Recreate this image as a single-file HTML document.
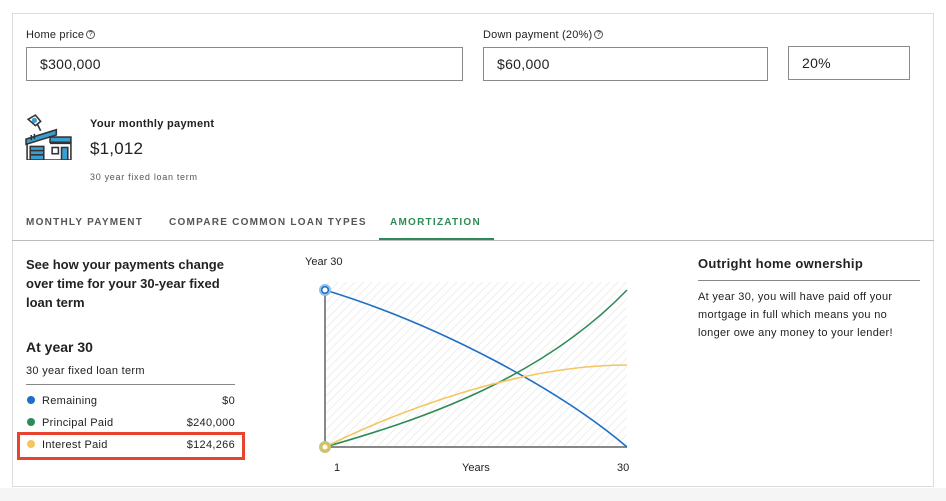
<!DOCTYPE html>
<html><head><style>
*{margin:0;padding:0;box-sizing:border-box}
body{width:946px;height:501px;background:#fff;font-family:"Liberation Sans",sans-serif;color:#222;position:relative;overflow:hidden}
.a{position:absolute;white-space:nowrap}
.card{position:absolute;left:12px;top:13px;width:922px;height:474px;border:1px solid #ddd;border-bottom:1px solid #ddd}
.inp{position:absolute;border:1px solid #8a8a8a;font-size:14px;padding-left:13px;line-height:32px;letter-spacing:.3px}
.lbl{font-size:11px;letter-spacing:.2px;color:#222}
.q{display:inline-block;width:9px;height:9px;border:1px solid #555;border-radius:50%;font-size:7px;line-height:7px;text-align:center;vertical-align:2px;margin-left:2px}
.tab{font-size:10px;font-weight:bold;letter-spacing:1.25px;color:#555}
.dot{display:inline-block;width:8px;height:8px;border-radius:50%;margin-right:7px;vertical-align:0}
.row{position:absolute;left:27px;width:208px;font-size:11px;letter-spacing:.3px}
.row span.v{position:absolute;right:0}
</style></head><body>
<div style="position:absolute;left:0;top:488px;width:946px;height:13px;background:#f5f5f5"></div>
<div class="card"></div>
<div class="a lbl" style="left:26px;top:29px">Home price<span class="q">?</span></div>
<div class="inp" style="left:26px;top:47px;width:437px;height:34px">$300,000</div>
<div class="a lbl" style="left:483px;top:29px">Down payment (20%)<span class="q">?</span></div>
<div class="inp" style="left:483px;top:47px;width:285px;height:34px">$60,000</div>
<div class="inp" style="left:788px;top:46px;width:122px;height:34px">20%</div>

<svg class="a" style="left:25px;top:112px" width="48" height="48" viewBox="0 0 46 46">
<g stroke="#333" stroke-width="1.5" fill="none">
<path d="M3 7 L10 3 L15 9 L10 13 Z" fill="#fff"/>
<circle cx="9" cy="8" r="2.5" fill="#3a9fd0" stroke="none"/>
<path d="M12 12 L15 18"/>
<path d="M1 26 L30 17 L30 22 L1 31 Z" fill="#3a9fd0"/>
<path d="M6 22 V27 M9 21 V26"/>
<path d="M2 30 V46 M2 46 H44 M44 46 V30 H24" />
<rect x="24" y="24" width="20" height="5" fill="#3a9fd0"/>
<rect x="5" y="33" width="13" height="13" fill="#3a9fd0"/>
<path d="M5 37 H18 M5 41 H18"/>
<rect x="26" y="34" width="6" height="6"/>
<rect x="35" y="34" width="6" height="12" fill="#3a9fd0"/>
</g></svg>
<div class="a" style="left:90px;top:118px;font-size:11px;font-weight:bold;letter-spacing:.3px">Your monthly payment</div>
<div class="a" style="left:90px;top:139px;font-size:17px;letter-spacing:.2px">$1,012</div>
<div class="a" style="left:90px;top:172px;font-size:9px;letter-spacing:.7px;color:#555">30 year fixed loan term</div>

<div class="a tab" style="left:26px;top:217px">MONTHLY PAYMENT</div>
<div class="a tab" style="left:169px;top:217px">COMPARE COMMON LOAN TYPES</div>
<div class="a tab" style="left:390px;top:217px;color:#2e8b57">AMORTIZATION</div>
<div class="a" style="left:379px;top:238px;width:115px;height:2px;background:#2e8b57"></div>
<div class="a" style="left:12px;top:240px;width:922px;height:1px;background:#bbb"></div>

<div class="a" style="left:26px;top:255px;font-size:13px;font-weight:bold;line-height:19px;white-space:normal;width:215px">See how your payments change over time for your 30-year fixed loan term</div>
<div class="a" style="left:26px;top:339px;font-size:14px;font-weight:bold">At year 30</div>
<div class="a" style="left:26px;top:365px;font-size:11px;letter-spacing:.3px">30 year fixed loan term</div>
<div class="a" style="left:26px;top:384px;width:209px;height:1px;background:#888"></div>
<div class="row" style="top:395px"><span class="dot" style="background:#1f6fc5"></span>Remaining<span class="v">$0</span></div>
<div class="row" style="top:417px"><span class="dot" style="background:#2e8b57"></span>Principal Paid<span class="v">$240,000</span></div>
<div class="row" style="top:439px"><span class="dot" style="background:#f5c55e"></span>Interest Paid<span class="v">$124,266</span></div>
<div class="a" style="left:17px;top:432px;width:228px;height:28px;border:3px solid #e8432e"></div>

<div class="a" style="left:305px;top:256px;font-size:11px">Year 30</div>
<svg class="a" style="left:300px;top:270px" width="340" height="190" viewBox="300 270 340 190">
<defs><pattern id="h" width="6" height="6" patternUnits="userSpaceOnUse" patternTransform="rotate(45)"><rect width="6" height="6" fill="#fff"/><line x1="0" y1="0" x2="0" y2="6" stroke="#eee" stroke-width="2"/></pattern></defs>
<rect x="326" y="282" width="301" height="165" fill="url(#h)"/>
<line x1="325" y1="290" x2="325" y2="447" stroke="#888" stroke-width="2"/>
<line x1="325" y1="447" x2="627" y2="447" stroke="#888" stroke-width="2"/>
<path d="M325 290 C440 325 560 390 627 447" stroke="#1f6fc5" stroke-width="1.6" fill="none"/>
<path d="M325 447 C420 420 540 380 627 290" stroke="#2e8b57" stroke-width="1.6" fill="none"/>
<path d="M325 447 C400 410 520 365 627 365" stroke="#f5c55e" stroke-width="1.6" fill="none"/>
<circle cx="325" cy="290" r="6" fill="#8fc1e6"/><circle cx="325" cy="290" r="3.3" fill="#fff" stroke="#1f6fc5" stroke-width="1.5"/>
<circle cx="325" cy="447" r="6" fill="#bcc88a"/><circle cx="325" cy="447" r="3.3" fill="#fff" stroke="#f0b840" stroke-width="1.5"/>
</svg>
<div class="a" style="left:334px;top:462px;font-size:11px">1</div>
<div class="a" style="left:462px;top:462px;font-size:11px">Years</div>
<div class="a" style="left:617px;top:462px;font-size:11px">30</div>

<div class="a" style="left:698px;top:256px;font-size:13px;font-weight:bold;letter-spacing:.3px">Outright home ownership</div>
<div class="a" style="left:698px;top:280px;width:222px;height:1px;background:#888"></div>
<div class="a" style="left:698px;top:288px;font-size:11px;line-height:18px;letter-spacing:.3px">At year 30, you will have paid off your<br>mortgage in full which means you no<br>longer owe any money to your lender!</div>
</body></html>
